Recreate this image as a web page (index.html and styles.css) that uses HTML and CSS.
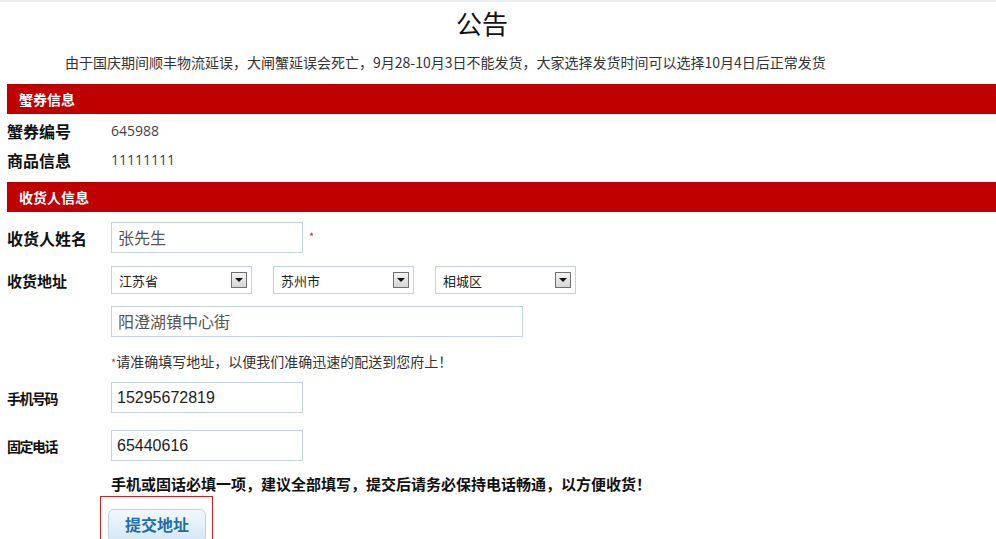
FILE: index.html
```html
<!DOCTYPE html>
<html lang="zh-CN">
<head>
  <meta charset="UTF-8" />
  <title>公告</title>
  <link rel="stylesheet" href="styles.css">
</head>
<body>

  <h1 class="title">公告</h1>
  <p class="notice">由于国庆期间顺丰物流延误，大闸蟹延误会死亡，9月28-10月3日不能发货，大家选择发货时间可以选择10月4日后正常发货</p>

  <div class="bar">蟹券信息</div>
  <div class="info-row info-first">
    <span class="label">蟹券编号</span>
    <span class="value">645988</span>
  </div>
  <div class="info-row">
    <span class="label">商品信息</span>
    <span class="value">11111111</span>
  </div>

  <div class="bar bar-second">收货人信息</div>

  <div class="row row-name">
    <span class="label label-big">收货人姓名</span>
    <div class="field">张先生</div>
    <span class="star">*</span>
  </div>

  <div class="row row-area">
    <span class="label label-mid">收货地址</span>
    <div class="select"><span>江苏省</span><i class="arrow"></i></div>
    <div class="select"><span>苏州市</span><i class="arrow"></i></div>
    <div class="select"><span>相城区</span><i class="arrow"></i></div>
  </div>

  <div class="row row-street">
    <div class="field field-wide">阳澄湖镇中心街</div>
  </div>

  <p class="tip"><span class="star-inline">*</span>请准确填写地址，以便我们准确迅速的配送到您府上！</p>

  <div class="row row-phone">
    <span class="label label-small">手机号码</span>
    <div class="field field-num">15295672819</div>
  </div>

  <div class="row row-tel">
    <span class="label label-small">固定电话</span>
    <div class="field field-num">65440616</div>
  </div>

  <p class="warn">手机或固话必填一项，建议全部填写，提交后请务必保持电话畅通，以方便收货！</p>

  <div class="submit-box">
    <button class="btn">提交地址</button>
  </div>

</body>
</html>
```

FILE: styles.css
```css
body {
  margin: 0;
  font-family: "Noto Sans CJK SC", "Noto Sans", sans-serif;
  background: #fff;
  color: #333;
  border-top: 2px solid #eceeef;
  overflow: hidden;
}

.title {
  margin: 4px 0 0;
  padding-right: 32px;
  font-size: 26px;
  font-weight: normal;
  line-height: 34px;
  color: #111;
  text-align: center;
}

.notice {
  margin: 11px 0 0 65px;
  font-size: 14px;
  line-height: 22px;
  color: #333;
}

.bar {
  margin: 11px 0 0 7px;
  height: 30px;
  line-height: 30px;
  background: #c00000;
  color: #fff;
  font-size: 14px;
  font-weight: bold;
  padding-left: 12px;
}

.bar-second {
  margin-top: 8px;
}

.info-row {
  display: flex;
  align-items: center;
  height: 29px;
  padding-left: 7px;
}

.info-first {
  margin-top: 2px;
}

.label {
  width: 104px;
  flex-shrink: 0;
  font-size: 16px;
  font-weight: bold;
  color: #111;
}

.value {
  font-family: "Open Sans", "Noto Sans", sans-serif;
  font-size: 14px;
  color: #444;
}

.row {
  display: flex;
  align-items: center;
  padding-left: 7px;
}

.row-name {
  margin-top: 10px;
}

.row-area {
  margin-top: 13px;
  gap: 21px;
}

.row-area .label {
  margin-right: -21px;
}

.row-street {
  margin-top: 12px;
  padding-left: 111px;
}

.row-phone {
  margin-top: 9px;
}

.row-tel {
  margin-top: 17px;
}

.label-mid {
  font-size: 15px;
}

.label-small {
  font-size: 14px;
  letter-spacing: -1.5px;
}

.field {
  box-sizing: border-box;
  width: 192px;
  height: 31px;
  border: 1px solid #c3d3e2;
  padding: 0 6px;
  line-height: 29px;
  font-size: 16px;
  color: #555;
}

.field-wide {
  width: 412px;
}

.field-num {
  font-family: "Liberation Sans", Arial, sans-serif;
  color: #222;
  font-size: 16px;
  padding-left: 5px;
}

.star {
  color: #e02020;
  font-size: 11px;
  margin-left: 6px;
  margin-top: -4px;
}

.select {
  box-sizing: border-box;
  width: 141px;
  height: 28px;
  border: 1px solid #c3d3e2;
  display: flex;
  align-items: center;
  justify-content: space-between;
  padding: 0 4px 0 7px;
  font-size: 13px;
  color: #222;
}

.arrow {
  width: 14px;
  height: 14px;
  border: 1px solid #707070;
  background: linear-gradient(#f4f4f4, #d6d6d6);
  position: relative;
}

.arrow::after {
  content: "";
  position: absolute;
  left: 3px;
  top: 5px;
  border-left: 4px solid transparent;
  border-right: 4px solid transparent;
  border-top: 4px solid #111;
}

.tip {
  margin: 13px 0 0 111px;
  font-size: 14px;
  line-height: 22px;
  color: #333;
}

.star-inline {
  color: #e02020;
  font-size: 11px;
}

.warn {
  margin: 12px 0 0 111px;
  font-size: 15px;
  line-height: 22px;
  font-weight: bold;
  color: #111;
}

.submit-box {
  margin: 1px 0 0 100px;
  width: 113px;
  height: 50px;
  border: 1px solid #d42020;
  box-sizing: border-box;
  padding: 12px 0 0 7px;
}

.btn {
  width: 98px;
  height: 34px;
  border: 1px solid #b9d2e6;
  border-radius: 6px;
  background: linear-gradient(#f2f8fd, #d3e6f5);
  color: #1f6ea6;
  font-family: "Noto Sans CJK SC", sans-serif;
  font-size: 16px;
  font-weight: bold;
  padding: 0 0 4px;
}
```
